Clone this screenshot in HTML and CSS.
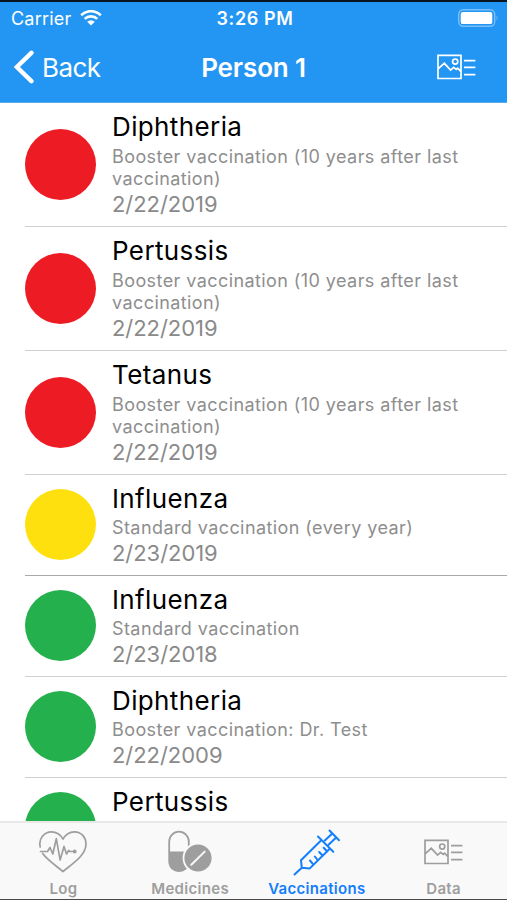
FILE: index.html
```html
<!DOCTYPE html>
<html lang="en">
<head>
    <meta charset="utf-8">
    <title>Vaccinations</title>
    <link rel="stylesheet" href="styles.css">
</head>
<body>
    <header>
        <div class="status-bar">
            <div class="carrier">
                <span>Carrier</span>
                <svg class="wifi" width="22" height="16" viewBox="0 0 22 16">
                    <path d="M1.2 5.2a14 14 0 0 1 19.6 0M4.7 8.9a9 9 0 0 1 12.6 0" fill="none" stroke="#fff" stroke-width="2.7"/>
                    <path d="M11 15.6l-3.8-3.9a5.4 5.4 0 0 1 7.6 0z" fill="#fff"/>
                </svg>
            </div>
            <div class="time">3:26 PM</div>
            <svg class="battery" width="41" height="18" viewBox="0 0 41 18">
                <rect x="0.7" y="0.7" width="36" height="16.6" rx="4.5" fill="none" stroke="#7abffa" stroke-width="1.4"/>
                <rect x="2.7" y="2.9" width="31.6" height="12.2" rx="2.2" fill="#fff"/>
                <path d="M38.6 6.4q1.9 2.6 0 5.2z" fill="#7abffa"/>
            </svg>
        </div>
        <nav class="nav-bar">
            <a class="back">
                <svg width="20" height="34" viewBox="0 0 20 34"><path d="M17.4 2.8L2.8 17l14.6 14.2" fill="none" stroke="#fff" stroke-width="4.4" stroke-linecap="round"/></svg>
                <span>Back</span>
            </a>
            <h1>Person 1</h1>
            <svg class="data-icon" width="39" height="26" viewBox="0 0 39 26">
                <path d="M1 1.3h23v23.2H1zM1.3 14.7l6-5.4 6.3 6.8 3-2.8 2.6 2.2 1.5-1.3 3.5 3.6M27 6.7h11.4M27 13.4h11.4M27 20.6h11.4"/>
                <circle cx="18.2" cy="7.6" r="2.6"/>
            </svg>
        </nav>
    </header>

    <main class="list">
        <div class="item long">
            <div class="dot red"></div>
            <div class="info">
                <h2>Diphtheria</h2>
                <p class="type">Booster vaccination (10 years after last<br>vaccination)</p>
                <p class="date">2/22/2019</p>
            </div>
        </div>
        <div class="item long">
            <div class="dot red"></div>
            <div class="info">
                <h2>Pertussis</h2>
                <p class="type">Booster vaccination (10 years after last<br>vaccination)</p>
                <p class="date">2/22/2019</p>
            </div>
        </div>
        <div class="item long">
            <div class="dot red"></div>
            <div class="info">
                <h2>Tetanus</h2>
                <p class="type">Booster vaccination (10 years after last<br>vaccination)</p>
                <p class="date">2/22/2019</p>
            </div>
        </div>
        <div class="item section-end">
            <div class="dot yellow"></div>
            <div class="info">
                <h2>Influenza</h2>
                <p class="type">Standard vaccination (every year)</p>
                <p class="date">2/23/2019</p>
            </div>
        </div>
        <div class="item">
            <div class="dot green"></div>
            <div class="info">
                <h2>Influenza</h2>
                <p class="type">Standard vaccination</p>
                <p class="date">2/23/2018</p>
            </div>
        </div>
        <div class="item">
            <div class="dot green"></div>
            <div class="info">
                <h2>Diphtheria</h2>
                <p class="type">Booster vaccination: Dr. Test</p>
                <p class="date">2/22/2009</p>
            </div>
        </div>
        <div class="item">
            <div class="dot green"></div>
            <div class="info">
                <h2>Pertussis</h2>
            </div>
        </div>
    </main>

    <footer class="tab-bar">
        <a class="tab">
            <svg width="50" height="44" viewBox="0 0 50 44" fill="none" stroke="currentColor" stroke-width="1.7" stroke-linejoin="round" stroke-linecap="round">
                <path d="M2.2 17C.2 8.5 6.3 1.8 13.5 1.8c5 0 9 2.7 11.5 7.2 2.5-4.5 6.5-7.2 11.5-7.2C43.3 1.8 48 7.3 48 14c0 11-12.6 19-23 27.5C17.5 35.3 9 29.7 4.7 23.5"/>
                <path d="M2.5 21.5h7l2.5-4 2.8 6.5 3.5-15.3 3.8 21.2 3.9-13.5 2.5 7.6 2.2-3.5 1.3 1h4"/>
                <circle cx="36.7" cy="21.5" r="1.1" fill="currentColor"/>
            </svg>
            <span>Log</span>
        </a>
        <a class="tab">
            <svg width="46" height="44" viewBox="0 0 46 44">
                <path d="M2.2 22V11.5a9.8 9.8 0 0 1 19.6 0V20" fill="none" stroke="currentColor" stroke-width="1.8"/>
                <path d="M1.3 21.5h21.4V31c0 14.5-21.4 14.5-21.4 0z" fill="currentColor"/>
                <circle cx="31" cy="28" r="14.5" fill="currentColor" stroke="#f9f9f9" stroke-width="1.8"/>
                <path d="M24.3 34.7L37.7 21.6" stroke="#f9f9f9" stroke-width="2" stroke-linecap="round"/>
            </svg>
            <span>Medicines</span>
        </a>
        <a class="tab active">
            <svg width="50" height="48" viewBox="0 0 50 48" fill="none" stroke="currentColor" stroke-width="2" stroke-linejoin="round" stroke-linecap="round">
                <path d="M37.5 2.5l9.5 9.8M40.3 5.4l-7.5 7M44.2 9.6l-7.4 7M26 8.5l15.300 15.200M29.500 12L9 32.300l.8 7.500 8 .6L38 20.500M9.800 39.800l-7.300 6.700"/>
                <path d="M31.700 19.800l3.300 3.400M27.200 24l3.300 3.500M22.800 28.500l2.800 3.500M18 32.500l3 3.700"/>
            </svg>
            <span>Vaccinations</span>
        </a>
        <a class="tab">
            <svg class="data-icon" width="39" height="26" viewBox="0 0 39 26">
                <path d="M1 1.3h23v23.2H1zM1.3 14.7l6-5.4 6.3 6.8 3-2.8 2.6 2.2 1.5-1.3 3.5 3.6M27 6.7h11.4M27 13.4h11.4M27 20.6h11.4"/>
                <circle cx="18.2" cy="7.6" r="2.6"/>
            </svg>
            <span>Data</span>
        </a>
    </footer>
</body>
</html>
```

FILE: styles.css
```css
* {
    box-sizing: border-box;
}
body {
    font-family: Inter, Roboto, sans-serif;
    background-color: #fff;
    margin: 0;
    height: 900px;
    display: flex;
    flex-direction: column;
    overflow: hidden;
    border-top: 2px solid #071522;
    border-bottom: 1px solid #4a4a4a;
}
h1, h2, p {
    margin: 0;
    font-weight: 400;
    white-space: nowrap;
}
svg {
    display: block;
    flex: none;
}

/* header */
header {
    height: 101px;
    flex: none;
    background-color: #2396f3;
    color: #fff;
    border-bottom: 1px solid #5aa9e8;
}
.status-bar {
    height: 32px;
    display: grid;
    grid-template-columns: 1fr auto 1fr;
    align-items: center;
    padding: 0 8px 0 11px;
    font-size: 18px;
}
.carrier {
    display: flex;
    align-items: center;
    gap: 9px;
    letter-spacing: 0.2px;
}
.time {
    font-weight: 600;
    letter-spacing: 0.6px;
}
.battery {
    justify-self: end;
}
.nav-bar {
    height: 66px;
    display: grid;
    grid-template-columns: 1fr auto 1fr;
    align-items: center;
    padding: 0 14px;
}
.back {
    display: flex;
    align-items: center;
    gap: 8px;
    font-size: 26px;
    letter-spacing: -0.6px;
}
.nav-bar h1 {
    font-size: 26px;
    font-weight: 600;
    letter-spacing: -0.15px;
}
.data-icon {
    fill: none;
    stroke: currentColor;
    stroke-width: 1.7;
}
.nav-bar .data-icon {
    justify-self: end;
    margin-right: 17px;
}

/* vaccination list */
.list {
    flex: 1;
    min-height: 0;
    overflow: hidden;
    padding-left: 25px;
}
.item {
    display: flex;
    align-items: center;
    gap: 16px;
    height: 101px;
    padding-bottom: 2px;
    border-bottom: 1px solid #d0d0d0;
}
.long {
    height: 124px;
    padding-bottom: 1px;
}
.section-end {
    border-bottom-color: #aaa;
}
.dot {
    width: 71px;
    height: 71px;
    border-radius: 50%;
    flex: none;
}
.red {
    background-color: #ed1c24;
}
.yellow {
    background-color: #ffe00f;
}
.green {
    background-color: #24b14d;
}
.info {
    align-self: flex-start;
    padding-top: 8px;
}
.info h2 {
    font-size: 26px;
    line-height: 31px;
    letter-spacing: 0.38px;
    color: #000;
}
.type {
    font-size: 18px;
    line-height: 22px;
    letter-spacing: 0.42px;
    color: #8e8e8e;
    padding-top: 3px;
}
.long .type {
    padding-top: 4px;
}
.date {
    font-size: 22px;
    line-height: 28px;
    letter-spacing: -0.05px;
    color: #8a8a8a;
}

/* tabs */
.tab-bar {
    height: 78px;
    flex: none;
    display: grid;
    grid-template-columns: repeat(4, 1fr);
    background-color: #f9f9f9;
    border-top: 2px solid #e8e8e8;
}
.tab {
    display: grid;
    grid-template-rows: 57px 16px;
    align-content: start;
    justify-items: center;
    align-items: center;
    font-size: 15px;
    font-weight: 600;
    letter-spacing: 0.3px;
    color: #9e9e9e;
}
.active {
    color: #147efb;
}
```
